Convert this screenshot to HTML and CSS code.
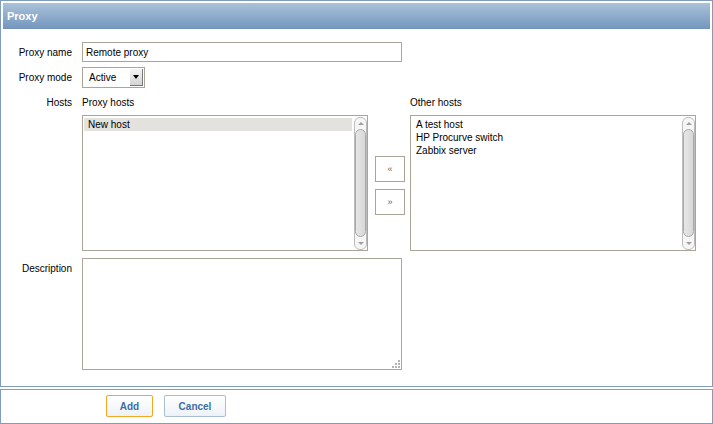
FILE: index.html
```html
<!DOCTYPE html>
<html lang="en">
<head>
<meta charset="UTF-8" />
<title>Proxy</title>
<link rel="stylesheet" href="styles.css">
</head>
<body>
<div class="panel panel-main">
  <div class="panel-header">Proxy</div>

  <div class="form">
    <!-- Proxy name -->
    <div class="row row-center">
      <div class="label">Proxy name</div>
      <input class="text-input" type="text" value="Remote proxy" />
    </div>

    <!-- Proxy mode -->
    <div class="row row-center row-mode">
      <div class="label">Proxy mode</div>
      <div class="select">
        <span class="select-value">Active</span>
        <span class="select-arrow"><span class="tri"></span></span>
      </div>
    </div>

    <!-- Hosts -->
    <div class="row row-hosts">
      <div class="label label-top">Hosts</div>
      <div class="hosts">
        <div class="host-col">
          <div class="list-title">Proxy hosts</div>
          <div class="listbox">
            <div class="items">
              <div class="item selected">New host</div>
            </div>
            <div class="scrollbar">
              <span class="sb-up"></span>
              <span class="sb-thumb"></span>
              <span class="sb-down"></span>
            </div>
          </div>
        </div>

        <div class="move-col">
          <button class="move-btn">&laquo;</button>
          <button class="move-btn">&raquo;</button>
        </div>

        <div class="host-col">
          <div class="list-title">Other hosts</div>
          <div class="listbox">
            <div class="items">
              <div class="item">A test host</div>
              <div class="item">HP Procurve switch</div>
              <div class="item">Zabbix server</div>
            </div>
            <div class="scrollbar">
              <span class="sb-up"></span>
              <span class="sb-thumb"></span>
              <span class="sb-down"></span>
            </div>
          </div>
        </div>
      </div>
    </div>

    <!-- Description -->
    <div class="row row-desc">
      <div class="label label-top">Description</div>
      <div class="textarea-wrap">
        <textarea class="textarea"></textarea>
        <span class="grip"></span>
      </div>
    </div>
  </div>
</div>

<div class="panel panel-footer">
  <button class="btn btn-add">Add</button>
  <button class="btn btn-cancel">Cancel</button>
</div>
</body>
</html>
```

FILE: styles.css
```css
* {
  box-sizing: border-box;
}

body {
  margin: 0;
  font-family: "Liberation Sans", Arial, sans-serif;
  font-size: 10px;
  color: #000;
  background: #fff;
}

.panel {
  border: 1px solid #7f9dbf;
  padding: 2px;
}
.panel-main {
  height: 387px;
}

.panel-header {
  height: 26px;
  line-height: 26px;
  padding-left: 4px;
  background: linear-gradient(#aac2d9, #7597bf);
  border-bottom: 1px solid #7393bb;
  color: #fff;
  font-weight: bold;
  font-size: 11px;
}

/* Form rows */
.form {
  padding-top: 13px;
}
.row {
  display: flex;
  column-gap: 10px;
}
.row-center {
  align-items: center;
}
.row-mode {
  margin-top: 5px;
}
.row-hosts {
  margin-top: 8px;
}
.row-desc {
  margin-top: 7px;
}
.label {
  width: 69px;
  flex-shrink: 0;
  text-align: right;
}
.label-top {
  line-height: 13px;
}
.row-desc .label-top {
  padding-top: 4px;
}

.text-input {
  width: 320px;
  height: 20px;
  margin: 0;
  padding: 0 3px;
  border: 1px solid #aaa596;
  font-family: inherit;
  font-size: 10px;
  color: #000;
  outline: none;
}

/* Select */
.select {
  width: 63px;
  height: 21px;
  border: 1px solid #aaa596;
  display: flex;
  align-items: stretch;
}
.select-value {
  flex: 1;
  padding-left: 6px;
  line-height: 19px;
}
.select-arrow {
  width: 13px;
  margin: 1px 1px 1px 0;
  background: linear-gradient(#f4f4f4, #d4d4d4);
  border-right: 1px solid #777;
  border-bottom: 1px solid #777;
  display: flex;
  align-items: center;
  justify-content: center;
}
.tri {
  width: 0;
  height: 0;
  border-left: 3px solid transparent;
  border-right: 3px solid transparent;
  border-top: 4px solid #000;
}

/* Hosts twin lists */
.hosts {
  display: flex;
}
.host-col {
  width: 286px;
}
.list-title {
  line-height: 13px;
  margin-bottom: 6px;
}
.listbox {
  height: 136px;
  border: 1px solid #aaa596;
  display: flex;
}
.items {
  flex: 1;
  padding: 2px 1px 0 1px;
}
.item {
  height: 13px;
  line-height: 13px;
  padding-left: 4px;
  margin-right: 1px;
}
.item.selected {
  background: #e3e2df;
}

.scrollbar {
  width: 13px;
  margin: 1px 0 0 0;
  height: 133px;
  border: 1px solid #bcbcbc;
  border-radius: 6px;
  background: #f6f6f6;
  display: flex;
  flex-direction: column;
  align-items: center;
}
.sb-up,
.sb-down {
  width: 0;
  height: 0;
  border-left: 3px solid transparent;
  border-right: 3px solid transparent;
}
.sb-up {
  border-bottom: 3px solid #a0a0a0;
  margin: 4px 0 4px;
}
.sb-down {
  border-top: 3px solid #a0a0a0;
  margin: 5px 0 4px;
}
.sb-thumb {
  flex: 1;
  width: 11px;
  border: 1px solid #a9a9a9;
  border-radius: 6px;
  background: linear-gradient(to right, #e6e6e6, #d8d8d8);
}

.move-col {
  width: 42px;
  padding: 60px 0 0 7px;
  display: flex;
  flex-direction: column;
  gap: 7px;
}
.move-btn {
  width: 30px;
  height: 26px;
  margin: 0;
  padding: 0;
  border: 1px solid #aaa596;
  background: #fff;
  color: #666;
  font-family: inherit;
  font-size: 9px;
}

/* Description */
.textarea-wrap {
  position: relative;
  width: 320px;
  height: 112px;
}
.textarea {
  display: block;
  width: 100%;
  height: 100%;
  margin: 0;
  border: 1px solid #aaa596;
  resize: none;
  outline: none;
}
.grip {
  position: absolute;
  right: 1px;
  bottom: 1px;
  width: 12px;
  height: 12px;
  background:
    linear-gradient(to bottom right, #fff 52%, transparent 52%),
    radial-gradient(circle at 1px 1px, #b4b4b4 0.8px, transparent 0.8px) 0 0 / 3px 3px;
}

/* Footer buttons */
.panel-footer {
  margin-top: 2px;
  height: 35px;
  padding: 5px 0 0 105px;
  display: flex;
  align-items: flex-start;
}
.btn {
  height: 22px;
  margin: 0 11px 0 0;
  padding: 0;
  border: 1px solid #a9bdd4;
  border-radius: 2px;
  background: linear-gradient(#ffffff, #eef2f7);
  color: #3d6da3;
  font-family: inherit;
  font-size: 10px;
  font-weight: bold;
}
.btn-add {
  width: 47px;
  border-color: #f5a623;
}
.btn-cancel {
  width: 62px;
}
```
